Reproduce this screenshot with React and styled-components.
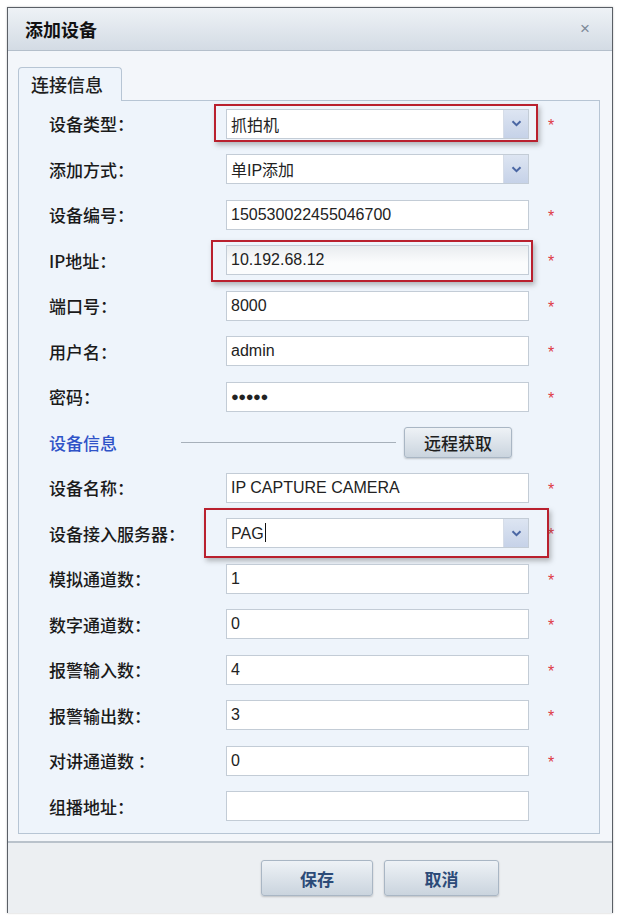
import React from "react";
import styled, { createGlobalStyle } from "styled-components";

const GlobalStyle = createGlobalStyle`
  html, body {
    margin: 0;
    padding: 0;
    background: #ffffff;
  }
  body {
    font-family: "Noto Sans CJK SC", "Liberation Sans", sans-serif;
  }
`;

const fields = [
  { label: "设备类型：", type: "select", value: "抓拍机", required: true, mark: { t: -5, l: -12, r: -9, b: -3 } },
  { label: "添加方式：", type: "select", value: "单IP添加" },
  { label: "设备编号：", value: "150530022455046700", required: true },
  { label: "IP地址：", value: "10.192.68.12", required: true, shaded: true, mark: { t: -5, l: -15, r: -4, b: -7 } },
  { label: "端口号：", value: "8000", required: true },
  { label: "用户名：", value: "admin", required: true },
  { label: "密码：", value: "●●●●●", required: true, secret: true },
  { section: "设备信息", action: "远程获取" },
  { label: "设备名称：", value: "IP CAPTURE CAMERA", required: true },
  { label: "设备接入服务器：", type: "select", value: "PAG", caret: true, required: true, mark: { t: -10, l: -22, r: -20, b: -10 } },
  { label: "模拟通道数：", value: "1", required: true },
  { label: "数字通道数：", value: "0", required: true },
  { label: "报警输入数：", value: "4", required: true },
  { label: "报警输出数：", value: "3", required: true },
  { label: "对讲通道数 ：", value: "0", required: true },
  { label: "组播地址：", value: "" },
];

const Dialog = styled.div`
  margin: 7px;
  width: 606px;
  height: 906px;
  box-sizing: border-box;
  border: 1px solid #5a5f66;
  display: flex;
  flex-direction: column;
  background: #f3f6fa;
  box-shadow: 0 0 2px rgba(0, 0, 0, 0.25);
`;

const TitleBar = styled.div`
  height: 42px;
  flex: none;
  display: flex;
  align-items: center;
  justify-content: space-between;
  padding: 0 22px 0 17px;
  background: linear-gradient(#eef2f6, #d3dbe4);
  border-bottom: 1px solid #b4bfcb;
`;

const Title = styled.h1`
  margin: 0;
  font-size: 18px;
  font-weight: 700;
  color: #111;
`;

const Close = styled.span`
  font-family: "Liberation Sans", sans-serif;
  font-size: 17px;
  color: #7d8a98;
`;

const Body = styled.div`
  flex: 1;
  padding: 16px 12px 7px 10px;
  display: flex;
  flex-direction: column;
`;

const Tabs = styled.div`
  display: flex;
  height: 34px;
  position: relative;
  z-index: 1;
`;

const Tab = styled.div`
  width: 104px;
  box-sizing: border-box;
  border: 1px solid #b7c5d4;
  border-bottom: none;
  border-radius: 4px 4px 0 0;
  background: #eef4fb;
  font-size: 18px;
  font-weight: 500;
  color: #1e1e1e;
  padding: 3px 0 0 12px;
`;

const Panel = styled.div`
  flex: 1;
  margin-top: -1px;
  border: 1px solid #b7c5d4;
  background: #eef4fb;
  padding: 0 0 4px 30px;
`;

const Row = styled.div`
  height: 45.5px;
  display: grid;
  grid-template-columns: 177px 303px 45px;
  align-items: center;
`;

const Label = styled.span`
  font-size: 17px;
  font-weight: 500;
  color: #1a1a1a;
  white-space: pre;
`;

const Cell = styled.div`
  position: relative;
  height: 30px;
`;

const Field = styled.div`
  height: 100%;
  box-sizing: border-box;
  border: 1px solid #c3ccd6;
  background: ${(p) => (p.$shaded ? "linear-gradient(#e9ecef, #fbfcfd 60%)" : "#fff")};
  display: flex;
  align-items: center;
  padding-left: 4px;
  font-family: "Liberation Sans", "Noto Sans CJK SC", sans-serif;
  font-size: ${(p) => (p.$secret ? "13px" : "16px")};
  letter-spacing: ${(p) => (p.$secret ? "-0.5px" : "0")};
  color: #222;
`;

const Value = styled.span`
  flex: 1;
`;

const Caret = styled.span`
  display: inline-block;
  width: 1px;
  height: 19px;
  background: #111;
  vertical-align: -3px;
  margin-left: 1px;
`;

const ArrowBox = styled.span`
  width: 24px;
  height: 100%;
  background: linear-gradient(#dde5f2, #c6d2e8);
  border-left: 1px solid #d6dde8;
  display: flex;
  align-items: center;
  justify-content: center;
`;

const Mark = styled.span`
  position: absolute;
  border: 2px solid #b9202e;
  box-shadow: 2px 3px 5px rgba(60, 60, 60, 0.35);
  pointer-events: none;
`;

const Star = styled.span`
  color: #de3b45;
  font-family: "Liberation Sans", sans-serif;
  font-size: 16px;
  padding-left: 19px;
  padding-top: 4px;
`;

const SectionRow = styled.div`
  height: 45.5px;
  display: flex;
  align-items: center;
`;

const SectionTitle = styled.span`
  width: 132px;
  font-size: 17px;
  font-weight: 500;
  color: #2f53c8;
`;

const Rule = styled.span`
  width: 215px;
  height: 1px;
  background: #a7b0ba;
  margin-right: 8px;
`;

const Button = styled.button`
  font-family: "Noto Sans CJK SC", sans-serif;
  font-size: 17px;
  font-weight: ${(p) => (p.$small ? 500 : 700)};
  color: ${(p) => (p.$small ? "#1e1e1e" : "#2c4b78")};
  width: ${(p) => p.$w}px;
  height: ${(p) => p.$h}px;
  padding: 0;
  border: 1px solid #a9b6c4;
  border-radius: 3px;
  background: linear-gradient(#eef2f6, #cad4de);
  box-shadow: 0 1px 2px rgba(0, 0, 0, 0.2);
`;

const Footer = styled.div`
  height: 72px;
  flex: none;
  box-sizing: border-box;
  border-top: 2px solid #b9c2cb;
  background: #eceff2;
  display: flex;
  justify-content: flex-end;
  align-items: center;
  gap: 11px;
  padding: 0 113px 0 0;
`;

const Chevron = () => (
  <svg width="11" height="7" viewBox="0 0 11 7">
    <path d="M1.5 1.2 L5.5 5.2 L9.5 1.2" fill="none" stroke="#4a66a3" strokeWidth="2" />
  </svg>
);

const FormRow = ({ f }) => (
  <Row>
    <Label>{f.label}</Label>
    <Cell>
      <Field $shaded={f.shaded} $secret={f.secret}>
        <Value>
          {f.value}
          {f.caret && <Caret />}
        </Value>
        {f.type === "select" && (
          <ArrowBox>
            <Chevron />
          </ArrowBox>
        )}
      </Field>
      {f.mark && (
        <Mark style={{ top: f.mark.t, left: f.mark.l, right: f.mark.r, bottom: f.mark.b }} />
      )}
    </Cell>
    {f.required ? <Star>*</Star> : <span />}
  </Row>
);

export default function App() {
  return (
    <>
      <GlobalStyle />
      <Dialog>
        <TitleBar>
          <Title>添加设备</Title>
          <Close>×</Close>
        </TitleBar>
        <Body>
          <Tabs>
            <Tab>连接信息</Tab>
          </Tabs>
          <Panel>
            {fields.map((f, i) =>
              f.section ? (
                <SectionRow key={i}>
                  <SectionTitle>{f.section}</SectionTitle>
                  <Rule />
                  <Button $small $w={108} $h={31}>
                    {f.action}
                  </Button>
                </SectionRow>
              ) : (
                <FormRow key={i} f={f} />
              )
            )}
          </Panel>
        </Body>
        <Footer>
          <Button $w={112} $h={36}>保存</Button>
          <Button $w={115} $h={36}>取消</Button>
        </Footer>
      </Dialog>
    </>
  );
}
